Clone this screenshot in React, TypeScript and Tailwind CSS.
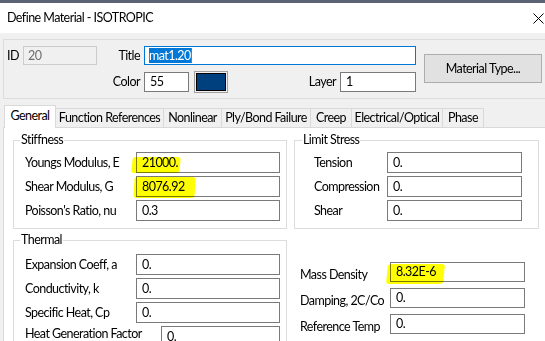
import React from 'react';

type FieldProps = {
  label: string;
  value: string;
  inputClass?: string;
  labelClass?: string;
};

function Field({ label, value, inputClass = 'w-[144px] h-[21px]', labelClass = '' }: FieldProps) {
  return (
    <div className="flex items-center justify-between">
      <span className={`whitespace-nowrap ${labelClass}`}>{label}</span>
      <div className={`${inputClass} shrink-0 border border-[#7a7a7a] bg-white pl-[5px] flex items-center`}>
        {value}
      </div>
    </div>
  );
}

const TABS = ['Function References', 'Nonlinear', 'Ply/Bond Failure', 'Creep', 'Electrical/Optical', 'Phase'];
const TAB_WIDTHS = ['w-[108px]', 'w-[58px]', 'w-[89px]', 'w-[41px]', 'w-[91px]', 'w-[41px]'];

export default function App() {
  return (
    <div className="relative w-[545px] h-[341px] overflow-hidden bg-[#f0f0f0] text-[12.5px] leading-[16px] tracking-[-0.55px] text-black font-['Lato',sans-serif]">
      {/* window frame + title bar */}
      <div className="h-[3px] bg-[#5a6374]" />
      <div className="h-[30px] bg-white flex items-center justify-between pl-[7px] pr-[1px]">
        <span>Define Material - ISOTROPIC</span>
        <svg width="11" height="11" viewBox="0 0 11 11">
          <path d="M0.5 0.5 L10.5 10.5 M10.5 0.5 L0.5 10.5" stroke="#000" strokeWidth="1" />
        </svg>
      </div>

      <div className="w-[560px] pt-[6px] pl-[3px]">
        {/* header group */}
        <div className="h-[60px] border border-[#dcdcdc] flex pl-[3px] pt-[6px]">
          <div className="flex flex-col">
            <div className="flex items-center h-[19px]">
              <span className="w-[16px]">ID</span>
              <div className="w-[74px] h-[19px] border border-[#cccccc] bg-[#f0f0f0] text-[#6d6d6d] pl-[4px] flex items-center">
                20
              </div>
              <span className="w-[47px] text-right pr-[4px]">Title</span>
              <div className="w-[272px] h-[19px] border border-[#0078d7] bg-white pl-[4px] flex items-center">
                <span className="bg-[#0078d7] text-white leading-[15px]">mat1.20</span>
                <span className="w-[1px] h-[15px] bg-[#d0601a]" />
              </div>
            </div>
            <div className="flex items-center h-[22px] mt-[6px]">
              <span className="w-[90px]" />
              <span className="w-[47px] text-right pr-[4px]">Color</span>
              <div className="w-[45px] h-[20px] border border-[#7a7a7a] bg-white pl-[5px] flex items-center">55</div>
              <div className="ml-[5px] w-[34px] h-[22px] border border-[#a0a0a0] p-[1px]">
                <div className="w-full h-full border border-black bg-[#00407e]" />
              </div>
              <span className="w-[112px] text-right pr-[4px]">Layer</span>
              <div className="w-[76px] h-[20px] border border-[#7a7a7a] bg-white pl-[5px] flex items-center">1</div>
            </div>
          </div>
          <button className="ml-[8px] mt-[8px] w-[118px] h-[29px] border border-[#adadad] bg-[#e1e1e1] flex items-center justify-center">
            Material Type...
          </button>
        </div>

        {/* tabs */}
        <div className="mt-[6px] flex items-end pl-[1px]">
          <div className="relative z-10 mb-[-1px] w-[52px] h-[23px] bg-white border-x border-t border-[#d9d9d9] flex items-center justify-center pb-[2px]">
            General
          </div>
          {TABS.map((t, i) => (
            <div
              key={t}
              className={`${TAB_WIDTHS[i]} h-[19px] border-t border-r border-[#d9d9d9] bg-[#f0f0f0] flex items-center justify-center whitespace-nowrap`}
            >
              {t}
            </div>
          ))}
        </div>

        {/* tab panel */}
        <div className="h-[230px] bg-white border border-[#d9d9d9] pl-[9px] pt-[4px]">
          <div className="grid grid-cols-[274px_245px] gap-x-[7px]">
            <fieldset className="border border-[#dcdcdc] pl-[11px] pr-[6px] pt-[4px] pb-[7px] flex flex-col gap-[3px]">
              <legend className="ml-[-5px] px-[1px]">Stiffness</legend>
              <Field label="Youngs Modulus, E" value="21000." />
              <Field label="Shear Modulus, G" value="8076.92" />
              <Field label="Poisson's Ratio, nu" value="0.3" />
            </fieldset>
            <fieldset className="border border-[#dcdcdc] pl-[19px] pr-[16px] pt-[4px] pb-[7px] flex flex-col gap-[3px]">
              <legend className="ml-[-12px] px-[1px]">Limit Stress</legend>
              <Field label="Tension" value="0." inputClass="w-[135px] h-[21px]" />
              <Field label="Compression" value="0." inputClass="w-[135px] h-[21px]" />
              <Field label="Shear" value="0." inputClass="w-[135px] h-[21px]" />
            </fieldset>

            <fieldset className="mt-[3px] border border-[#dcdcdc] pl-[11px] pr-[6px] pt-[6px] pb-[7px] flex flex-col gap-[3px]">
              <legend className="ml-[-5px] px-[1px]">Thermal</legend>
              <Field label="Expansion Coeff, a" value="0." />
              <Field label="Conductivity, k" value="0." />
              <Field label="Specific Heat, Cp" value="0." />
              <Field label="Heat Generation Factor" value="0." inputClass="w-[119px] h-[21px]" labelClass="mb-[5px]" />
            </fieldset>
            <div className="w-[231px] pl-[6px] pt-[32px] flex flex-col gap-[4px]">
              <Field label="Mass Density" value="8.32E-6" inputClass="w-[135px] h-[20px]" labelClass="mt-[6px]" />
              <Field label="Damping, 2C/Co" value="0." inputClass="w-[135px] h-[20px]" labelClass="mt-[6px]" />
              <Field label="Reference Temp" value="0." inputClass="w-[135px] h-[20px]" labelClass="mt-[6px]" />
            </div>
          </div>
        </div>
      </div>

      {/* highlighter marks */}
      <span className="absolute left-[132px] top-[157px] w-[48px] h-[16px] bg-[#ffff00] mix-blend-multiply rounded-[3px] -skew-x-6" />
      <span className="absolute left-[134px] top-[177px] w-[61px] h-[21px] bg-[#ffff00] mix-blend-multiply rounded-[3px] -skew-x-3" />
      <span className="absolute left-[387px] top-[264px] w-[57px] h-[20px] bg-[#ffff00] mix-blend-multiply rounded-[3px] -skew-x-6" />
    </div>
  );
}
